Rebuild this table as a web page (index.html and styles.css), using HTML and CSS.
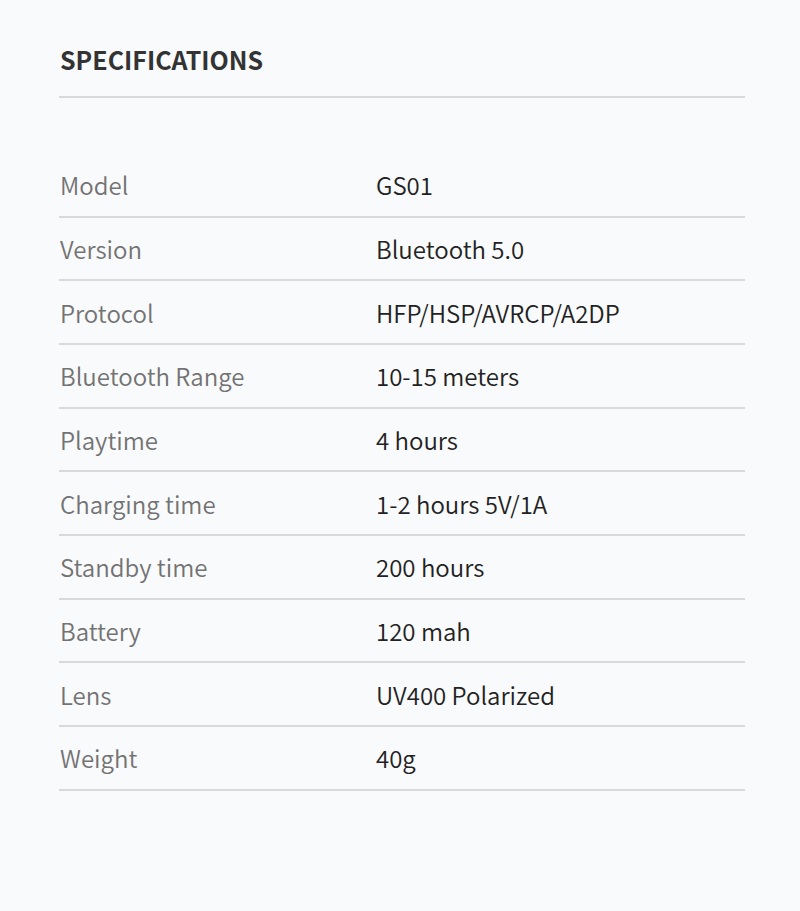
FILE: index.html
```html
<!DOCTYPE html>
<html>
<head>
<meta charset="utf-8">
<link rel="stylesheet" href="styles.css">
</head>
<body>
<div class="spec">
  <h2 class="spec-title">SPECIFICATIONS</h2>
  <div class="spec-table">
    <div class="row"><span class="label">Model</span><span class="value">GS01</span></div>
    <div class="row"><span class="label">Version</span><span class="value">Bluetooth 5.0</span></div>
    <div class="row"><span class="label">Protocol</span><span class="value">HFP/HSP/AVRCP/A2DP</span></div>
    <div class="row"><span class="label">Bluetooth Range</span><span class="value">10-15 meters</span></div>
    <div class="row"><span class="label">Playtime</span><span class="value">4 hours</span></div>
    <div class="row"><span class="label">Charging time</span><span class="value">1-2 hours 5V/1A</span></div>
    <div class="row"><span class="label">Standby time</span><span class="value">200 hours</span></div>
    <div class="row"><span class="label">Battery</span><span class="value">120 mah</span></div>
    <div class="row"><span class="label">Lens</span><span class="value">UV400 Polarized</span></div>
    <div class="row"><span class="label">Weight</span><span class="value">40g</span></div>
  </div>
</div>
</body>
</html>
```
FILE: styles.css
```css
html, body {
  margin: 0;
  padding: 0;
  background: #f9fafc;
}
body {
  font-family: "Noto Sans CJK SC", "Noto Sans", sans-serif;
  width: 800px;
  height: 911px;
  overflow: hidden;
}
.spec {
  margin-left: 59px;
  width: 686px;
  padding-top: 41px;
}
.spec-title {
  margin: 0;
  padding-left: 1px;
  font-size: 25px;
  font-weight: 700;
  color: #333333;
  line-height: 36px;
  height: 57px;
  box-sizing: border-box;
  border-bottom: 2px solid #d9d9d9;
}
.spec-table {
  margin-top: 56px;
}
.row {
  display: flex;
  align-items: center;
  height: 63.67px;
  box-sizing: border-box;
  border-bottom: 2px solid #d9d9d9;
  padding-left: 1px;
}
.label {
  width: 316px;
  font-size: 24px;
  font-weight: 350;
  color: #737373;
}
.value {
  font-size: 24px;
  font-weight: 350;
  color: #222222;
}
```
